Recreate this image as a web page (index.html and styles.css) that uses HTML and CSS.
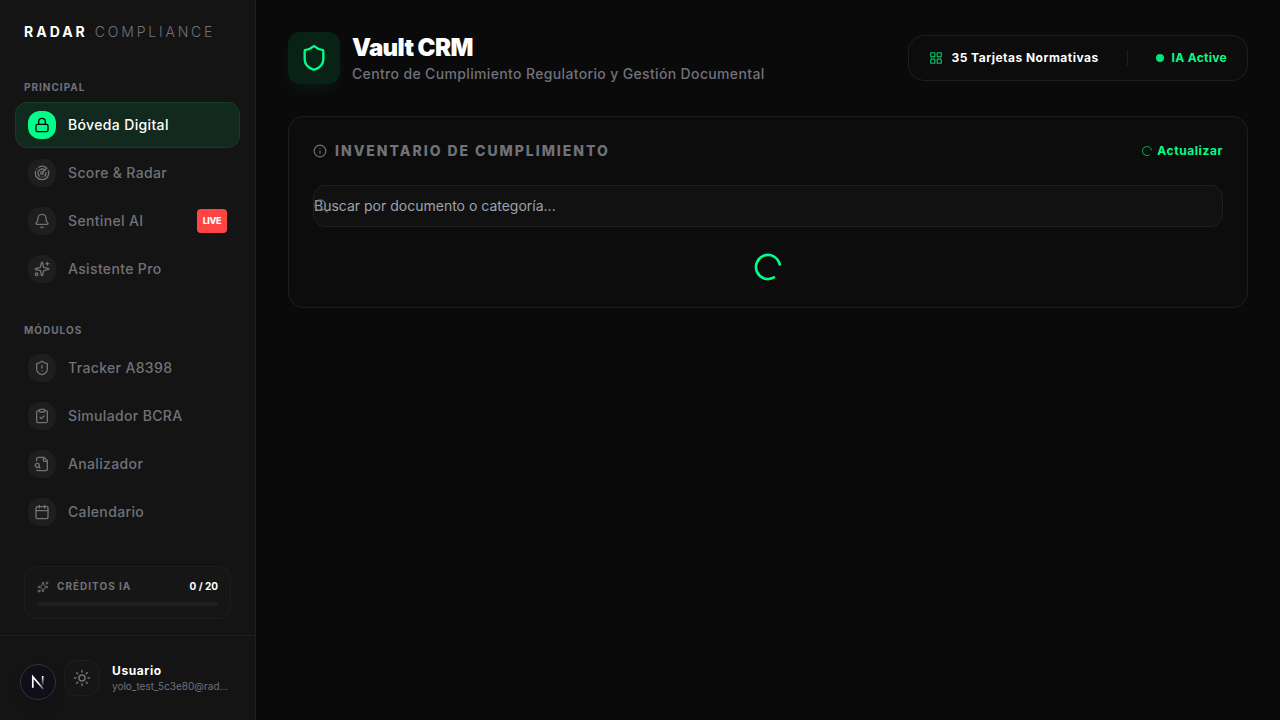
FILE: index.html
```html
<!DOCTYPE html>
<html lang="es">
<head>
<meta charset="utf-8">
<meta name="viewport" content="width=device-width, initial-scale=1">
<title>Vault CRM</title>
<link rel="stylesheet" href="styles.css">
</head>
<body>
<div class="app">
  <aside class="sidebar">
    <div class="brand"><strong>RADAR</strong><span>COMPLIANCE</span></div>
    <nav class="nav">
      <section class="group">
        <h2 class="group-title">PRINCIPAL</h2>
        <a class="item active" href="#"><span class="chip"><svg class="icon icon-sm" viewBox="0 0 24 24"><rect width="18" height="11" x="3" y="11" rx="2"/><path d="M7 11V7a5 5 0 0 1 10 0v4"/></svg></span>Bóveda Digital</a>
        <a class="item" href="#"><span class="chip"><svg class="icon icon-sm" viewBox="0 0 24 24"><path d="M19.07 4.93A10 10 0 0 0 6.99 3.34M4 6h.01M2.29 9.62a10 10 0 1 0 19.02-1.27M16.24 7.76a6 6 0 1 0-8.01 8.91M12 18h.01M17.99 11.66a6 6 0 0 1-2.22 5.01"/><circle cx="12" cy="12" r="2"/><path d="m13.41 10.59 5.66-5.66"/></svg></span>Score &amp; Radar</a>
        <a class="item" href="#"><span class="chip"><svg class="icon icon-sm" viewBox="0 0 24 24"><path d="M10.268 21a2 2 0 0 0 3.464 0M3.262 15.326A1 1 0 0 0 4 17h16a1 1 0 0 0 .74-1.673C19.41 13.956 18 12.499 18 8A6 6 0 0 0 6 8c0 4.499-1.411 5.956-2.738 7.326"/></svg></span>Sentinel AI<span class="live">LIVE</span></a>
        <a class="item" href="#"><span class="chip"><svg class="icon icon-sm" viewBox="0 0 24 24"><path d="M11.017 2.814a1 1 0 0 1 1.966 0l1.051 5.558a2 2 0 0 0 1.594 1.594l5.558 1.051a1 1 0 0 1 0 1.966l-5.558 1.051a2 2 0 0 0-1.594 1.594l-1.051 5.558a1 1 0 0 1-1.966 0l-1.051-5.558a2 2 0 0 0-1.594-1.594l-5.558-1.051a1 1 0 0 1 0-1.966l5.558-1.051a2 2 0 0 0 1.594-1.594zM20 2v4M22 4h-4"/><circle cx="4" cy="20" r="2"/></svg></span>Asistente Pro</a>
      </section>
      <section class="group">
        <h2 class="group-title">MÓDULOS</h2>
        <a class="item" href="#"><span class="chip"><svg class="icon icon-sm" viewBox="0 0 24 24"><path d="M20 13c0 5-3.5 7.5-7.66 8.95a1 1 0 0 1-.67-.01C7.5 20.5 4 18 4 13V6a1 1 0 0 1 1-1c2 0 4.5-1.2 6.24-2.72a1.17 1.17 0 0 1 1.52 0C14.51 3.81 17 5 19 5a1 1 0 0 1 1 1zM12 8v4M12 16h.01"/></svg></span>Tracker A8398</a>
        <a class="item" href="#"><span class="chip"><svg class="icon icon-sm" viewBox="0 0 24 24"><rect width="8" height="4" x="8" y="2" rx="1"/><path d="M16 4h2a2 2 0 0 1 2 2v14a2 2 0 0 1-2 2H6a2 2 0 0 1-2-2V6a2 2 0 0 1 2-2h2M9 14l2 2 4-4"/></svg></span>Simulador BCRA</a>
        <a class="item" href="#"><span class="chip"><svg class="icon icon-sm" viewBox="0 0 24 24"><path d="M14 2v4a2 2 0 0 0 2 2h4M4.268 21a2 2 0 0 0 1.727 1H18a2 2 0 0 0 2-2V7l-5-5H6a2 2 0 0 0-2 2v3M9 18l-1.5-1.5"/><circle cx="5" cy="14" r="3"/></svg></span>Analizador</a>
        <a class="item" href="#"><span class="chip"><svg class="icon icon-sm" viewBox="0 0 24 24"><path d="M8 2v4M16 2v4M3 10h18"/><rect width="18" height="18" x="3" y="4" rx="2"/></svg></span>Calendario</a>
      </section>
    </nav>
    <div class="credits">
      <div class="credits-row">
        <svg class="icon icon-xs" viewBox="0 0 24 24"><path d="M11.017 2.814a1 1 0 0 1 1.966 0l1.051 5.558a2 2 0 0 0 1.594 1.594l5.558 1.051a1 1 0 0 1 0 1.966l-5.558 1.051a2 2 0 0 0-1.594 1.594l-1.051 5.558a1 1 0 0 1-1.966 0l-1.051-5.558a2 2 0 0 0-1.594-1.594l-5.558-1.051a1 1 0 0 1 0-1.966l5.558-1.051a2 2 0 0 0 1.594-1.594zM20 2v4M22 4h-4"/><circle cx="4" cy="20" r="2"/></svg>
        <span>CRÉDITOS IA</span><strong>0 / 20</strong>
      </div>
      <div class="track"></div>
    </div>
    <footer class="account">
      <button class="theme" type="button" aria-label="Cambiar tema"><svg class="icon icon-md" viewBox="0 0 24 24"><circle cx="12" cy="12" r="4"/><path d="M12 2v2M12 20v2M4.93 4.93l1.41 1.41M17.66 17.66l1.41 1.41M2 12h2M20 12h2M6.34 17.66l-1.41 1.41M19.07 4.93l-1.41 1.41"/></svg></button>
      <div class="user"><div class="user-name">Usuario</div><div class="user-mail">yolo_test_5c3e80@rad...</div></div>
    </footer>
  </aside>

  <main class="main">
    <header class="header">
      <div class="logo"><svg class="icon icon-xl" viewBox="0 0 24 24"><path d="M20 13c0 5-3.5 7.5-7.66 8.95a1 1 0 0 1-.67-.01C7.5 20.5 4 18 4 13V6a1 1 0 0 1 1-1c2 0 4.5-1.2 6.24-2.72a1.17 1.17 0 0 1 1.52 0C14.51 3.81 17 5 19 5a1 1 0 0 1 1 1z"/></svg></div>
      <div class="titles">
        <h1>Vault CRM</h1>
        <p>Centro de Cumplimiento Regulatorio y Gestión Documental</p>
      </div>
      <div class="status">
        <div class="count"><svg class="icon" viewBox="0 0 24 24"><rect width="7" height="7" x="3" y="3" rx="1"/><rect width="7" height="7" x="14" y="3" rx="1"/><rect width="7" height="7" x="14" y="14" rx="1"/><rect width="7" height="7" x="3" y="14" rx="1"/></svg>35 Tarjetas Normativas</div>
        <div class="divider"></div>
        <div class="online"><span class="dot"></span>IA Active</div>
      </div>
    </header>

    <section class="panel">
      <div class="panel-head">
        <svg class="icon" viewBox="0 0 24 24"><circle cx="12" cy="12" r="10"/><path d="M12 16v-4M12 8h.01"/></svg>
        <h2>INVENTARIO DE CUMPLIMIENTO</h2>
        <button class="refresh" type="button"><svg class="icon icon-xs spin" viewBox="0 0 24 24"><path d="M21 12a9 9 0 1 1-6.219-8.56"/></svg>Actualizar</button>
      </div>
      <div class="search">
        <input type="text" aria-label="Buscar" placeholder="Buscar por documento o categoría...">
        <svg class="icon icon-sm search-icon" viewBox="0 0 24 24"><circle cx="11" cy="11" r="8"/><path d="m21 21-4.3-4.3"/></svg>
      </div>
      <div class="loading"><svg class="icon icon-2xl spin" viewBox="0 0 24 24"><path d="M21 12a9 9 0 1 1-6.219-8.56"/></svg></div>
    </section>
  </main>
</div>
<button class="dev-badge" type="button" aria-label="Next.js">
  <svg viewBox="0 0 34 34" width="34" height="34" fill="none">
    <defs>
      <linearGradient id="g1" x1="18" y1="18" x2="23" y2="24" gradientUnits="userSpaceOnUse"><stop stop-color="#fff"/><stop offset="1" stop-color="#fff" stop-opacity="0.2"/></linearGradient>
      <linearGradient id="g2" x1="22" y1="11" x2="22" y2="21" gradientUnits="userSpaceOnUse"><stop stop-color="#fff"/><stop offset="1" stop-color="#fff" stop-opacity="0"/></linearGradient>
    </defs>
    <path d="M11.800 22.700V11.800L22.300 24" stroke="url(#g1)" stroke-width="1.700"/>
    <path d="M21.700 11v11" stroke="url(#g2)" stroke-width="1.700"/>
  </svg>
</button>
</body>
</html>
```
FILE: styles.css
```css
* { box-sizing: border-box; }
body {
  margin: 0;
  background: #0a0a0a;
  color: #fff;
  font-family: Inter, "Liberation Sans", sans-serif;
  font-size: 14px;
  line-height: 20px;
}
h1, h2, p { margin: 0; }
button, input { font: inherit; letter-spacing: inherit; }
button { padding: 0; cursor: pointer; }

.icon {
  width: 14px;
  height: 14px;
  flex: none;
  display: block;
  fill: none;
  stroke: currentColor;
  stroke-width: 2;
  stroke-linecap: round;
  stroke-linejoin: round;
}
.icon-xs { width: 12px; height: 12px; }
.icon-sm { width: 16px; height: 16px; }
.icon-md { width: 18px; height: 18px; }
.icon-xl { width: 28px; height: 28px; }
.icon-2xl { width: 32px; height: 32px; }
.spin { transform: rotate(60deg); }

.app { display: flex; min-height: 100vh; }

.sidebar {
  width: 256px;
  flex: none;
  display: flex;
  flex-direction: column;
  background: #141414;
  border-right: 1px solid #1f1f1f;
}
.brand {
  display: flex;
  gap: 7px;
  padding: 22px 24px;
  letter-spacing: 0.2em;
  font-weight: 300;
  color: #71717a;
}
.brand strong { font-weight: 700; color: #fff; letter-spacing: 3px; }
.nav { flex: 1; padding: 16px 15px 0; }
.group { display: flex; flex-direction: column; gap: 2px; margin-bottom: 31px; }
.group-title {
  padding: 0 9px;
  margin-bottom: 5px;
  font-size: 10px;
  line-height: 15px;
  font-weight: 700;
  letter-spacing: 0.1em;
  color: #71717a;
}
.item {
  display: flex;
  align-items: center;
  gap: 12px;
  padding: 8px 12px;
  border: 1px solid transparent;
  border-radius: 12px;
  color: #71717a;
  font-weight: 500;
  letter-spacing: 0.025em;
  text-decoration: none;
}
.item.active { background: #12291e; border-color: #11402a; color: #fff; }
.chip {
  width: 28px;
  height: 28px;
  display: grid;
  place-items: center;
  border-radius: 12px;
  background: #1e1e1e;
}
.active .chip { background: #00ff88; color: #0a0a0a; }
.live {
  margin-left: auto;
  padding: 6px;
  border-radius: 4px;
  background: #ff4444;
  color: #fff;
  font-size: 9px;
  line-height: 12px;
  font-weight: 800;
  letter-spacing: -0.05em;
}

.credits {
  margin: 0 24px 16px;
  padding: 12px;
  border: 1px solid #1e1e1e;
  border-radius: 12px;
  background: #161616;
}
.credits-row {
  display: flex;
  align-items: center;
  gap: 8px;
  margin-bottom: 8px;
  font-size: 10px;
  line-height: 15px;
  font-weight: 700;
  letter-spacing: 0.1em;
  color: #71717a;
}
.credits-row strong { margin-left: auto; color: #fff; font-weight: 700; letter-spacing: 0; }
.track { height: 4px; border-radius: 4px; background: #1f1f1f; }

.account {
  display: flex;
  align-items: center;
  gap: 12px;
  padding: 24px 24px 24px 64px;
  border-top: 1px solid #1f1f1f;
}
.theme {
  width: 36px;
  height: 36px;
  flex: none;
  display: grid;
  place-items: center;
  border: 1px solid #1e1e1e;
  border-radius: 12px;
  background: #161616;
  color: #71717a;
}
.user-name { font-size: 12px; line-height: 16px; font-weight: 700; letter-spacing: 0.05em; }
.user-mail {
  white-space: nowrap;
  font-size: 10px;
  line-height: 15px;
  color: #71717a;
}

.main { flex: 1; min-width: 0; padding: 32px; }
.header { display: flex; align-items: center; gap: 12px; margin-bottom: 32px; }
.logo {
  width: 52px;
  height: 52px;
  flex: none;
  display: grid;
  place-items: center;
  border-radius: 12px;
  background: #082215;
  color: #00ff88;
  box-shadow: 0 8px 16px -4px rgba(0, 255, 136, 0.08);
}
.titles { flex: 1; }
.titles h1 { font-size: 24px; line-height: 32px; font-weight: 900; letter-spacing: -0.025em; }
.titles p { font-weight: 500; color: #71717a; letter-spacing: 0.025em; }
.status {
  display: flex;
  align-items: center;
  gap: 28px;
  padding: 14px 20px;
  border: 1px solid #1e1e1e;
  border-radius: 16px;
  background: #0c0c0c;
  font-size: 12px;
  line-height: 16px;
  font-weight: 700;
  letter-spacing: 0.025em;
}
.count, .online { display: flex; align-items: center; gap: 8px; }
.count { letter-spacing: 0.04em; }
.count .icon { color: #00cc6e; }
.divider { width: 1px; height: 16px; background: #1f1f1f; }
.online { color: #00ff88; }
.dot { width: 8px; height: 8px; border-radius: 50%; background: #00e67b; }

.panel {
  display: flex;
  flex-direction: column;
  gap: 24px;
  padding: 24px;
  border: 1px solid #1e1e1e;
  border-radius: 16px;
  background: #0c0c0c;
}
.panel-head { display: flex; align-items: center; gap: 8px; color: #71717a; }
.panel-head h2 { font-size: 14px; font-weight: 800; letter-spacing: 0.14em; }
.refresh {
  display: flex;
  align-items: center;
  gap: 4px;
  margin-left: auto;
  border: 0;
  background: none;
  color: #00ff88;
  font-size: 12px;
  font-weight: 700;
  letter-spacing: 0.05em;
}
.refresh .icon { opacity: 0.6; }
.search { position: relative; }
.search input {
  display: block;
  width: 100%;
  height: 42px;
  padding: 0 0 2px;
  border: 1px solid #1f1f1f;
  border-radius: 12px;
  outline: 0;
  background: #111;
  color: #fff;
}
.search input::placeholder { color: #9ca3af; opacity: 1; }
.search-icon { position: absolute; left: 0; top: 13px; color: #71717a; opacity: 0.8; }
.loading { display: flex; justify-content: center; color: #00ff88; }

.dev-badge {
  position: fixed;
  left: 20px;
  bottom: 20px;
  width: 36px;
  height: 36px;
  display: grid;
  place-items: center;
  border: 1px solid #35323f;
  border-radius: 50%;
  background: #100e19;
  box-shadow: 0 8px 12px rgba(0, 0, 0, 0.12);
}
```
